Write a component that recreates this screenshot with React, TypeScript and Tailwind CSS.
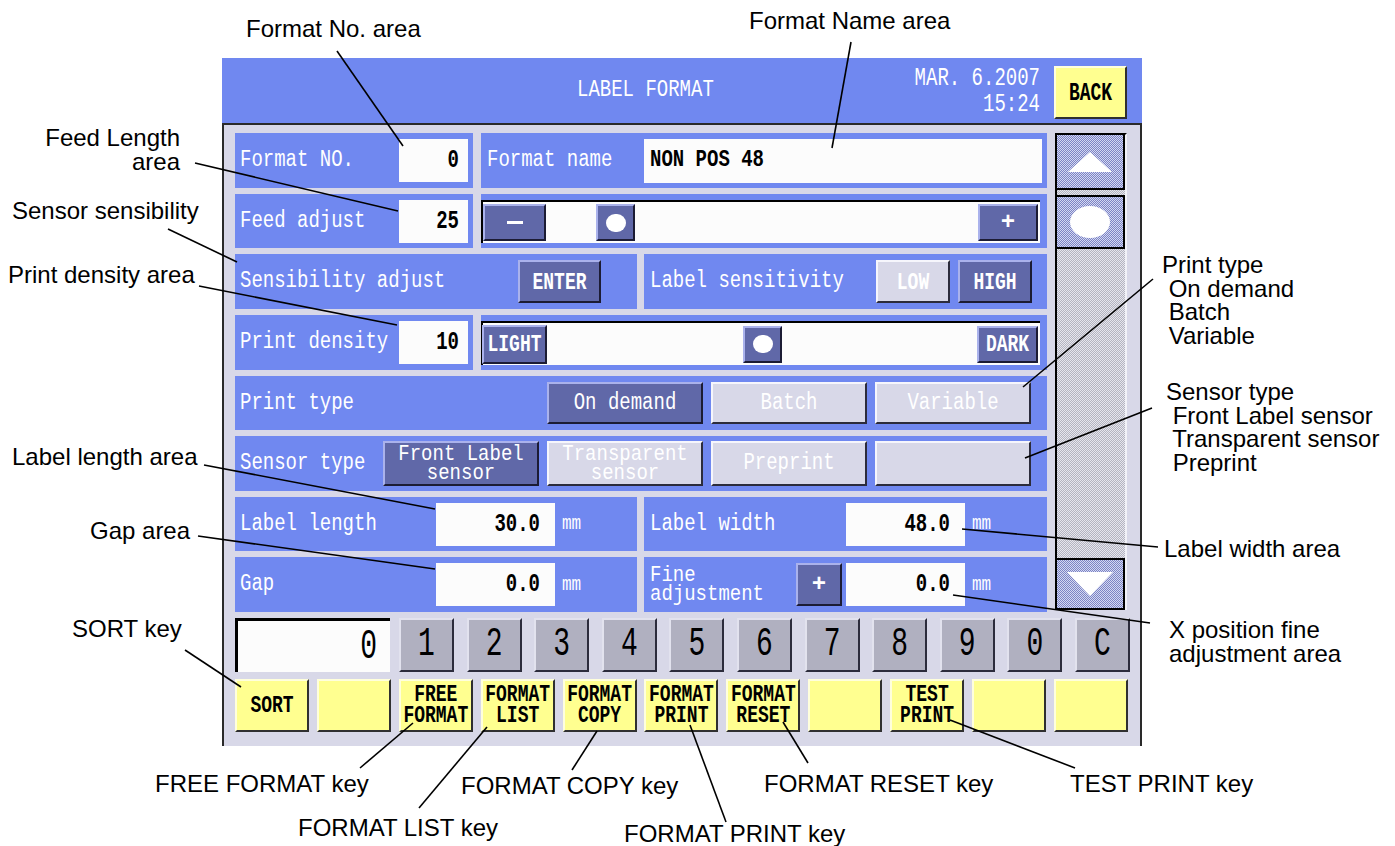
import React from 'react';

type Kids = { children?: React.ReactNode; className?: string };

// the device font is tall and narrow, so the mono text gets stretched vertically
function Tall({ children, className = 'scale-y-[1.3]' }: Kids) {
  return <span className={`inline-block ${className}`}>{children}</span>;
}

function Panel({ children, className = '' }: Kids) {
  return <div className={`bg-[#7088f0] flex items-center ${className}`}>{children}</div>;
}

function Label({ children, className = '' }: Kids) {
  return (
    <div className={`text-white text-[19px] leading-none whitespace-pre ${className}`}>
      <Tall>{children}</Tall>
    </div>
  );
}

function Value({ children, className = '' }: Kids) {
  return (
    <div className={`h-[43px] bg-[#fcfcfc] flex items-center justify-end text-black text-[19px] font-bold leading-none ${className}`}>
      <Tall className="scale-y-[1.4]">{children}</Tall>
    </div>
  );
}

function Mm({ className = '' }: Kids) {
  return (
    <div className={`text-white text-[16px] leading-none ${className}`}>
      <Tall className="scale-y-[1.3]">mm</Tall>
    </div>
  );
}

const BTN = {
  slate: 'bg-[#6068a8] text-white border-t-[#aab2ec] border-l-[#aab2ec] border-r-[#1c1c34] border-b-[#1c1c34]',
  light: 'bg-[#d8d8e8] text-white border-t-[#f6f6fc] border-l-[#f6f6fc] border-r-[#2c2c3c] border-b-[#2c2c3c]',
  grey: 'bg-[#b0b0c0] text-black border-t-[#e2e2ee] border-l-[#e2e2ee] border-r-[#2c2c3c] border-b-[#2c2c3c]',
  yellow: 'bg-[#ffff90] text-black border-t-[#ffffdc] border-l-[#ffffdc] border-r-[#303030] border-b-[#303030]',
};

function Btn({ kind, children, className = '' }: Kids & { kind: keyof typeof BTN }) {
  return (
    <div className={`flex items-center justify-center text-center border-2 shrink-0 ${BTN[kind]} ${className}`}>
      {children}
    </div>
  );
}

function Thumb({ className = '' }: Kids) {
  return (
    <Btn kind="slate" className={`w-[39px] h-[37px] ${className}`}>
      <div className="w-[20px] h-[18px] rounded-full bg-white" />
    </Btn>
  );
}

function FnKey({ lines }: { lines: string[] }) {
  return (
    <Btn kind="yellow" className="w-[74px] h-[53px] flex-col gap-[5px] text-[18px] font-bold">
      {lines.map((l) => (
        <Tall key={l} className="scale-y-[1.3] leading-[16px]">{l}</Tall>
      ))}
    </Btn>
  );
}

const DITHER_GREY = 'bg-[image:repeating-conic-gradient(#b4b4c0_0%_25%,#e6e6ee_0%_50%)] bg-[length:2px_2px]';
const DITHER_BLUE = 'bg-[image:repeating-conic-gradient(#7c84c4_0%_25%,#d4d8f2_0%_50%)] bg-[length:2px_2px]';

const leaders: [number, number, number, number][] = [
  [337, 51, 403, 146],
  [851, 42, 832, 148],
  [195, 163, 398, 211],
  [168, 229, 237, 262],
  [199, 286, 397, 325],
  [204, 465, 435, 509],
  [198, 536, 435, 569],
  [185, 650, 241, 687],
  [360, 768, 413, 723],
  [419, 808, 487, 727],
  [572, 770, 597, 731],
  [726, 822, 690, 725],
  [808, 763, 783, 722],
  [950, 720, 1075, 768],
  [962, 529, 1158, 547],
  [953, 595, 1150, 623],
  [1023, 387, 1153, 279],
  [1025, 458, 1152, 408],
];

function Note({ className, children }: Kids) {
  return <div className={`absolute text-[24px] leading-[23.5px] text-black whitespace-pre ${className}`}>{children}</div>;
}

export default function App() {
  const keys = ['1', '2', '3', '4', '5', '6', '7', '8', '9', '0', 'C'];
  const fnKeys = [['SORT'], [], ['FREE', 'FORMAT'], ['FORMAT', 'LIST'], ['FORMAT', 'COPY'], ['FORMAT', 'PRINT'], ['FORMAT', 'RESET'], [], ['TEST', 'PRINT'], [], []];

  return (
    <div className="relative w-[1395px] h-[846px] bg-white overflow-hidden font-['Liberation_Sans',Arial,sans-serif]">
      {/* Screen */}
      <div className="absolute left-[222px] top-[58px] w-[920px] flex flex-col font-['Liberation_Mono','DejaVu_Sans_Mono',monospace]">
        {/* Header */}
        <div className="h-[65px] bg-[#7088f0] flex items-center text-white">
          <div className="pl-[355px] text-[19px] leading-none">
            <Tall>LABEL FORMAT</Tall>
          </div>
          <div className="ml-auto text-right text-[19px] leading-[26px]">
            <div><Tall className="scale-y-[1.4]">MAR. 6.2007</Tall></div>
            <div><Tall className="scale-y-[1.4]">15:24</Tall></div>
          </div>
          <Btn kind="yellow" className="self-start mt-[8px] ml-[14px] mr-[15px] w-[73px] h-[53px] text-[18px] font-bold leading-none">
            <Tall className="scale-y-[1.4]">BACK</Tall>
          </Btn>
        </div>

        {/* Body */}
        <div className="border-x-2 border-t-2 border-[#2a2a2a] bg-[#d8d8e8] pl-[11px] pt-[8px] pb-[14px]">
          <div className="flex gap-[8px]">
            {/* Rows */}
            <div className="w-[812px] flex flex-col gap-[6px]">
              <div className="flex gap-[8px] h-[55px]">
                <Panel className="w-[238px] pl-[5px] pr-[5px]">
                  <Label className="flex-1">Format NO.</Label>
                  <Value className="w-[69px] pr-[9px]">0</Value>
                </Panel>
                <Panel className="flex-1 pl-[6px] pr-[5px]">
                  <Label className="w-[157px]">Format name</Label>
                  <div className="flex-1 h-[44px] bg-[#fcfcfc] flex items-center pl-[6px] text-black text-[19px] font-bold leading-none">
                    <Tall>NON POS 48</Tall>
                  </div>
                </Panel>
              </div>

              <div className="flex gap-[8px] h-[54px]">
                <Panel className="w-[238px] pl-[5px] pr-[5px]">
                  <Label className="flex-1">Feed adjust</Label>
                  <Value className="w-[69px] pr-[9px]">25</Value>
                </Panel>
                <Panel className="flex-1 pr-[7px] pt-[6px] pb-[5px]">
                  <div className="flex-1 h-full bg-[#fcfcfc] border-t-2 border-l-2 border-black flex items-center">
                    <Btn kind="slate" className="w-[63px] h-[37px]">
                      <div className="w-[16px] h-[3px] bg-white" />
                    </Btn>
                    <Thumb className="ml-[50px]" />
                    <Btn kind="slate" className="ml-auto mr-[2px] w-[60px] h-[37px] text-[24px] font-bold leading-none">+</Btn>
                  </div>
                </Panel>
              </div>

              <div className="flex gap-[7px] h-[55px]">
                <Panel className="w-[402px] pl-[5px]">
                  <Label className="w-[278px]">Sensibility adjust</Label>
                  <Btn kind="slate" className="w-[83px] h-[43px] text-[18px] font-bold leading-none">
                    <Tall className="scale-y-[1.35]">ENTER</Tall>
                  </Btn>
                </Panel>
                <Panel className="flex-1 pl-[6px]">
                  <Label className="w-[226px]">Label sensitivity</Label>
                  <Btn kind="light" className="w-[74px] h-[43px] text-[18px] font-bold leading-none">
                    <Tall className="scale-y-[1.35]">LOW</Tall>
                  </Btn>
                  <Btn kind="slate" className="ml-[8px] w-[74px] h-[43px] text-[18px] font-bold leading-none">
                    <Tall className="scale-y-[1.35]">HIGH</Tall>
                  </Btn>
                </Panel>
              </div>

              <div className="flex gap-[8px] h-[55px]">
                <Panel className="w-[238px] pl-[5px] pr-[5px]">
                  <Label className="flex-1">Print density</Label>
                  <Value className="w-[69px] pr-[9px]">10</Value>
                </Panel>
                <Panel className="flex-1 pr-[7px] pt-[6px] pb-[5px]">
                  <div className="flex-1 h-full bg-[#fcfcfc] border-t-2 border-l-2 border-black flex items-center">
                    <Btn kind="slate" className="w-[65px] h-[39px] -ml-[1px] text-[18px] font-bold leading-none">
                      <Tall className="scale-y-[1.35]">LIGHT</Tall>
                    </Btn>
                    <Thumb className="ml-[196px]" />
                    <Btn kind="slate" className="ml-auto mr-[2px] w-[61px] h-[37px] text-[18px] font-bold leading-none">
                      <Tall className="scale-y-[1.35]">DARK</Tall>
                    </Btn>
                  </div>
                </Panel>
              </div>

              <Panel className="h-[54px] pl-[5px] pr-[16px] gap-[8px]">
                <Label className="flex-1">Print type</Label>
                <Btn kind="slate" className="w-[156px] h-[42px] text-[19px] leading-none">
                  <Tall>On demand</Tall>
                </Btn>
                <Btn kind="light" className="w-[156px] h-[42px] text-[19px] leading-none">
                  <Tall>Batch</Tall>
                </Btn>
                <Btn kind="light" className="w-[156px] h-[42px] text-[19px] leading-none">
                  <Tall>Variable</Tall>
                </Btn>
              </Panel>

              <Panel className="h-[55px] pl-[5px] pr-[16px]">
                <Label className="w-[143px]">Sensor type</Label>
                <Btn kind="slate" className="w-[156px] h-[45px] flex-col gap-[4px] text-[19px]">
                  <Tall className="scale-y-[1.15] leading-[15px]">Front Label</Tall>
                  <Tall className="scale-y-[1.15] leading-[15px]">sensor</Tall>
                </Btn>
                <Btn kind="light" className="ml-[8px] w-[156px] h-[45px] flex-col gap-[4px] text-[19px]">
                  <Tall className="scale-y-[1.15] leading-[15px]">Transparent</Tall>
                  <Tall className="scale-y-[1.15] leading-[15px]">sensor</Tall>
                </Btn>
                <Btn kind="light" className="ml-[8px] w-[156px] h-[45px] text-[19px] leading-none">
                  <Tall>Preprint</Tall>
                </Btn>
                <Btn kind="light" className="ml-[8px] w-[156px] h-[45px]" />
              </Panel>

              <div className="flex gap-[7px] h-[54px]">
                <Panel className="w-[402px] pl-[5px]">
                  <Label className="w-[196px]">Label length</Label>
                  <Value className="w-[119px] pr-[15px]">30.0</Value>
                  <Mm className="ml-[7px]" />
                </Panel>
                <Panel className="flex-1 pl-[6px]">
                  <Label className="w-[196px]">Label width</Label>
                  <Value className="w-[119px] pr-[15px]">48.0</Value>
                  <Mm className="ml-[7px]" />
                </Panel>
              </div>

              <div className="flex gap-[7px] h-[55px]">
                <Panel className="w-[402px] pl-[5px]">
                  <Label className="w-[196px]">Gap</Label>
                  <Value className="w-[119px] pr-[15px]">0.0</Value>
                  <Mm className="ml-[7px]" />
                </Panel>
                <Panel className="flex-1 pl-[6px]">
                  <div className="w-[146px] text-white text-[19px] flex flex-col items-start gap-[4px]">
                    <Tall className="scale-y-[1.15] leading-[15px]">Fine</Tall>
                    <Tall className="scale-y-[1.15] leading-[15px]">adjustment</Tall>
                  </div>
                  <Btn kind="slate" className="w-[46px] h-[43px] text-[24px] font-bold leading-none">+</Btn>
                  <Value className="ml-[4px] w-[119px] pr-[15px]">0.0</Value>
                  <Mm className="ml-[7px]" />
                </Panel>
              </div>
            </div>

            {/* Scroll column */}
            <div className={`w-[72px] h-[477px] border-l-2 border-t-2 border-r-2 border-l-black border-t-black border-r-[#f2f2f8] flex flex-col ${DITHER_GREY}`}>
              <div className={`h-[55px] border-r-2 border-b-2 border-black flex items-center justify-center ${DITHER_BLUE}`}>
                <svg width="46" height="22" viewBox="0 0 46 22">
                  <path d="M23 1 L45 21 L1 21 Z" fill="#fff" />
                </svg>
              </div>
              <div className={`mt-[5px] h-[54px] border-t-2 border-r-2 border-b-2 border-black flex items-center justify-center ${DITHER_BLUE}`}>
                <svg width="42" height="34" viewBox="0 0 42 34">
                  <ellipse cx="21" cy="17" rx="20" ry="16" fill="#fff" />
                </svg>
              </div>
              <div className="flex-1" />
              <div className={`h-[52px] border-t-2 border-r-2 border-b-2 border-black flex items-center justify-center ${DITHER_BLUE}`}>
                <svg width="48" height="26" viewBox="0 0 48 26">
                  <path d="M1 1 L47 1 L24 25 Z" fill="#fff" />
                </svg>
              </div>
            </div>
          </div>

          {/* Numeric keys */}
          <div className="flex h-[54px] mt-[6px]">
            <div className="w-[155px] bg-[#fcfcfc] border-t-[3px] border-l-[3px] border-black flex items-center justify-end pr-[13px] text-[28px] leading-none">
              <Tall className="scale-y-[1.5]">0</Tall>
            </div>
            <div className="ml-[9px] flex gap-[12.6px]">
              {keys.map((k, i) => (
                <Btn key={i} kind="grey" className="w-[55px] h-[54px] text-[28px] leading-none">
                  <Tall className="scale-y-[1.45]">{k}</Tall>
                </Btn>
              ))}
            </div>
          </div>

          {/* Function keys */}
          <div className="flex gap-[7.9px] h-[53px] mt-[7px]">
            {fnKeys.map((l, i) => (
              <FnKey key={i} lines={l} />
            ))}
          </div>
        </div>
      </div>

      {/* Leader lines */}
      <svg className="absolute inset-0 pointer-events-none" width="1395" height="846" viewBox="0 0 1395 846">
        {leaders.map(([x1, y1, x2, y2], i) => (
          <line key={i} x1={x1} y1={y1} x2={x2} y2={y2} stroke="#000" strokeWidth="1.6" />
        ))}
      </svg>

      {/* Annotations */}
      <Note className="left-[246px] top-[17px]">Format No. area</Note>
      <Note className="left-[749px] top-[9px]">Format Name area</Note>
      <Note className="left-[20px] top-[126px] w-[160px] text-right">{'Feed Length\narea'}</Note>
      <Note className="left-[12px] top-[199px]">Sensor sensibility</Note>
      <Note className="left-[8px] top-[263px]">Print density area</Note>
      <Note className="left-[12px] top-[445px]">Label length area</Note>
      <Note className="left-[90px] top-[519px]">Gap area</Note>
      <Note className="left-[72px] top-[617px]">SORT key</Note>
      <Note className="left-[155px] top-[772px]">FREE FORMAT key</Note>
      <Note className="left-[298px] top-[816px]">FORMAT LIST key</Note>
      <Note className="left-[461px] top-[774px]">FORMAT COPY key</Note>
      <Note className="left-[624px] top-[822px]">FORMAT PRINT key</Note>
      <Note className="left-[764px] top-[772px]">FORMAT RESET key</Note>
      <Note className="left-[1070px] top-[772px]">TEST PRINT key</Note>
      <Note className="left-[1162px] top-[253px] leading-[23.3px]">
        {'Print type\n On demand\n Batch\n Variable'}
      </Note>
      <Note className="left-[1166px] top-[380px] leading-[23.3px]">
        {'Sensor type\n Front Label sensor\n Transparent sensor\n Preprint'}
      </Note>
      <Note className="left-[1164px] top-[537px]">Label width area</Note>
      <Note className="left-[1169px] top-[618px]">{'X position fine\nadjustment area'}</Note>
    </div>
  );
}
